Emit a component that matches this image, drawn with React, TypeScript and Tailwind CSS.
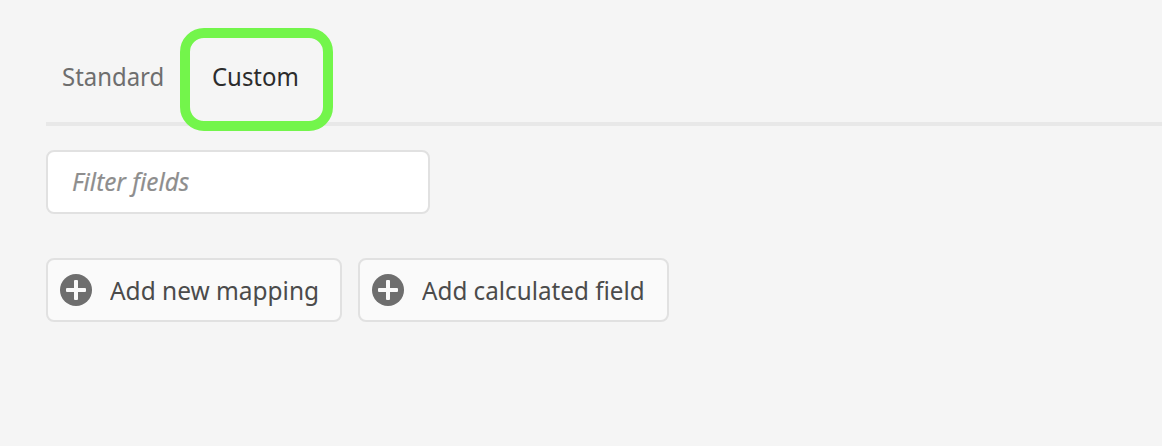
const actions = [
  { label: "Add new mapping", width: "w-[296px]", text: "scale-x-[0.94]" },
  { label: "Add calculated field", width: "w-[311px]", text: "scale-x-[0.932]" },
];

function AddIcon() {
  return (
    <svg viewBox="0 0 32 32" className="mr-[18px] size-8 shrink-0">
      <circle cx="16" cy="16" r="16" fill="#6e6e6e" />
      <rect x="14" y="6" width="4" height="20" rx="1" fill="#fafafa" />
      <rect x="6" y="14" width="20" height="4" rx="1" fill="#fafafa" />
    </svg>
  );
}

export default function App() {
  return (
    <main className="h-[446px] w-full overflow-hidden bg-[#f5f5f5] pl-[46px] pt-7 font-['Noto_Sans',sans-serif] text-[26px]">
      <nav className="flex h-[98px] items-start border-b-4 border-[#e8e8e8]">
        <button className="mt-[30px] ml-4 h-9 w-[102px] text-left leading-9 text-[#6e6e6e]">
          <span className="inline-block origin-left scale-x-[0.92] whitespace-nowrap">Standard</span>
        </button>
        <button className="relative ml-4 flex h-[103px] w-[153px] shrink-0 items-start rounded-[24px] border-[10px] border-[#73f54b] pt-5 pl-[22px] leading-9 text-[#2c2c2c]">
          <span className="inline-block origin-left scale-x-[0.92] whitespace-nowrap">Custom</span>
        </button>
      </nav>
      <div className="mt-6 flex h-16 w-96 items-center rounded-lg border-2 border-[#e1e1e1] bg-white pb-0.5 pl-6 italic text-[#8e8e8e]">
        <span className="inline-block origin-left scale-x-[0.935] whitespace-nowrap [-webkit-text-stroke:0.2px_#8e8e8e]">Filter fields</span>
      </div>
      <div className="mt-11 flex gap-4">
        {actions.map(({ label, width, text }) => (
          <button key={label} className={`flex h-16 items-center rounded-lg border-2 border-[#e1e1e1] bg-[#fafafa] pl-3 text-[#4b4b4b] ${width}`}>
            <AddIcon />
            <span className={`inline-block origin-left whitespace-nowrap ${text}`}>{label}</span>
          </button>
        ))}
      </div>
    </main>
  );
}
